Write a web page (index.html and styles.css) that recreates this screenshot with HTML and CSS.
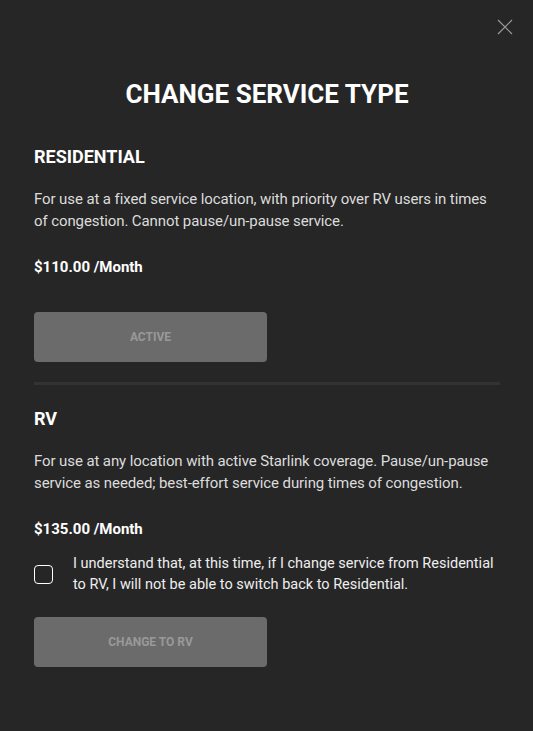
FILE: index.html
```html
<!DOCTYPE html>
<html lang="en">
<head>
    <meta charset="UTF-8">
    <title>Change Service Type</title>
    <link rel="stylesheet" href="styles.css">
</head>
<body>
    <div class="modal">
        <button class="close" aria-label="Close">
            <svg width="16" height="16" viewBox="0 0 16 16">
                <path d="M1 1L15 15M15 1L1 15" stroke="#9a9a9a" stroke-width="1.2" fill="none"/>
            </svg>
        </button>

        <h1>CHANGE SERVICE TYPE</h1>

        <div class="plan">
            <h2>RESIDENTIAL</h2>
            <p class="desc">For use at a fixed service location, with priority over RV users in times of congestion. Cannot pause/un-pause service.</p>
            <p class="price">$110.00 /Month</p>
            <button class="action" disabled>ACTIVE</button>
        </div>

        <hr class="divider">

        <div class="plan">
            <h2>RV</h2>
            <p class="desc">For use at any location with active Starlink coverage. Pause/un-pause service as needed; best-effort service during times of congestion.</p>
            <p class="price">$135.00 /Month</p>
            <label class="confirm">
                <span class="box"></span>
                <span class="confirm-text">I understand that, at this time, if I change service from Residential to RV, I will not be able to switch back to Residential.</span>
            </label>
            <button class="action" disabled>CHANGE TO RV</button>
        </div>
    </div>
</body>
</html>
```

FILE: styles.css
```css
body {
    margin: 0;
    background-color: #262626;
    font-family: Roboto, "Liberation Sans", sans-serif;
    color: #fff;
}

.modal {
    position: relative;
    padding: 78px 33px 40px 34px;
}

.close {
    position: absolute;
    top: 19px;
    right: 20px;
    background: none;
    border: none;
    padding: 0;
    width: 16px;
    height: 16px;
    cursor: pointer;
}

h1 {
    margin: 0 0 35px;
    text-align: center;
    font-size: 26px;
    font-weight: 700;
    line-height: 32px;
}

h2 {
    margin: 0 0 19px;
    font-size: 18px;
    font-weight: 700;
    line-height: 24px;
}

.desc {
    margin: 0 0 25px;
    font-size: 15px;
    line-height: 22px;
    color: #dcdcdc;
    letter-spacing: -0.1px;
}

.price {
    margin: 0 0 35px;
    font-size: 15px;
    font-weight: 700;
    line-height: 20px;
}

.action {
    display: block;
    width: 233px;
    height: 50px;
    border: none;
    border-radius: 4px;
    background: #6b6b6b;
    color: #999;
    font-family: Roboto, "Liberation Sans", sans-serif;
    font-size: 12px;
    font-weight: 700;
}

.plan:last-child .price {
    margin-bottom: 24px;
}

.divider {
    margin: 20px 0 22px;
    border: none;
    height: 3px;
    background: #333;
}

.confirm {
    display: flex;
    align-items: center;
    gap: 20px;
    margin: -10px 0 22px;
}

.box {
    flex: none;
    width: 17px;
    height: 17px;
    border: 1.5px solid #fff;
    border-radius: 4px;
}

.confirm-text {
    font-size: 14.5px;
    line-height: 21px;
    color: #eee;
}
```
